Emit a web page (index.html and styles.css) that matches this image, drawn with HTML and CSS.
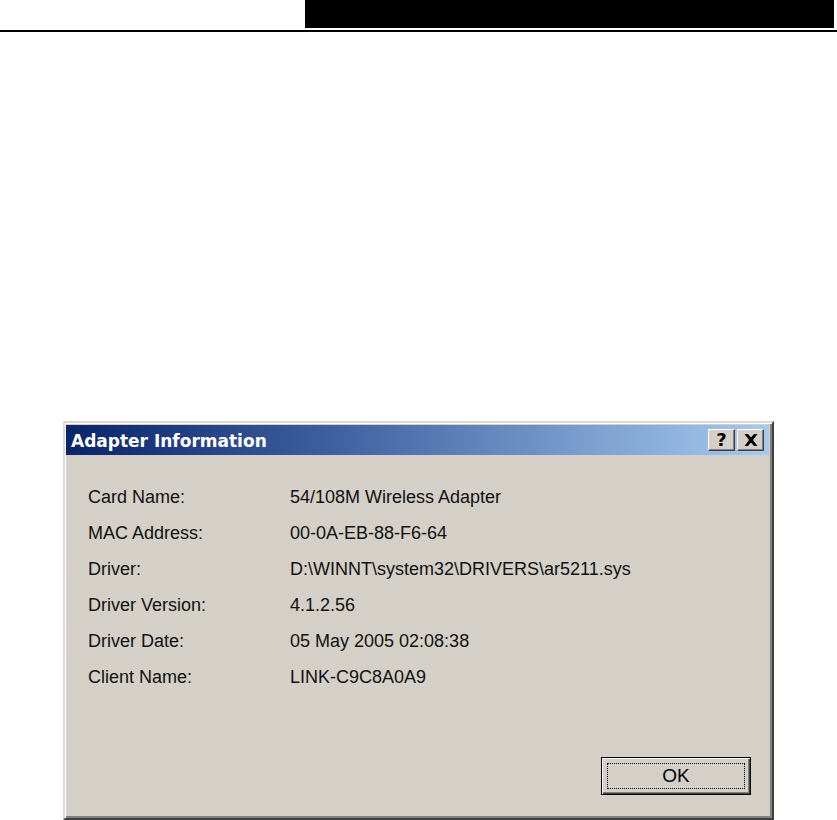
FILE: index.html
```html
<!DOCTYPE html>
<html lang="en">
<head>
<meta charset="utf-8">
<title>Adapter Information</title>
<link rel="stylesheet" href="styles.css">
</head>
<body>
<header class="topbar">
  <div class="blackbox"></div>
</header>
<div class="rule"></div>

<section class="dialog">
  <div class="titlebar">
    <span class="title">Adapter Information</span>
    <div class="tbuttons">
      <button class="tbtn"><span class="qmark">?</span></button>
      <button class="tbtn">
        <svg width="14" height="12" viewBox="0 0 14 12"><path d="M0.5 0h3.5l3 3.6 3-3.6h3.5L9 6l4.5 6H10L7 8.4 4 12H0.5L5 6z" fill="#000"/></svg>
      </button>
    </div>
  </div>

  <div class="info">
    <div class="label">Card Name:</div><div class="value">54/108M Wireless Adapter</div>
    <div class="label">MAC Address:</div><div class="value">00-0A-EB-88-F6-64</div>
    <div class="label">Driver:</div><div class="value">D:\WINNT\system32\DRIVERS\ar5211.sys</div>
    <div class="label">Driver Version:</div><div class="value">4.1.2.56</div>
    <div class="label">Driver Date:</div><div class="value">05 May 2005 02:08:38</div>
    <div class="label">Client Name:</div><div class="value">LINK-C9C8A0A9</div>
  </div>

  <div class="footer">
    <button class="okbtn"><span class="focus">OK</span></button>
  </div>
</section>
</body>
</html>
```

FILE: styles.css
```css
html, body {
  margin: 0;
  padding: 0;
  background: #fff;
}
body {
  width: 837px;
  height: 820px;
  overflow: hidden;
  font-family: "Liberation Sans", Arial, sans-serif;
}
.topbar {
  display: flex;
  height: 28px;
}
.blackbox {
  margin-left: 305px;
  width: 529px;
  background: #000;
}
.rule {
  margin-top: 2px;
  height: 2px;
  background: #000;
}
.dialog {
  box-sizing: border-box;
  margin: 389px 0 0 63px;
  width: 711px;
  height: 399px;
  background: #d4d0c8;
  border: 2px solid;
  border-color: #dcd9d2 #404040 #404040 #dcd9d2;
  box-shadow: inset 1px 1px #fff, inset -2px -2px #808080;
  padding: 2px 3px 2px 1px;
  display: flex;
  flex-direction: column;
}
.titlebar {
  height: 30px;
  display: flex;
  align-items: center;
  justify-content: space-between;
  padding: 0 5px 0 5px;
  background: linear-gradient(to right, #0a246a 0%, #3a5c9c 35%, #a6caf0 100%);
}
.title {
  font-family: "DejaVu Sans", Tahoma, sans-serif;
  font-weight: bold;
  font-size: 17px;
  color: #fff;
  margin-top: 1px;
}
.tbuttons {
  display: flex;
  gap: 2px;
}
.tbtn {
  box-sizing: border-box;
  width: 27px;
  height: 22px;
  padding: 0;
  margin: 0;
  background: #d4d0c8;
  border: 1px solid;
  border-color: #fff #404040 #404040 #fff;
  box-shadow: inset -1px -1px #808080;
  display: flex;
  align-items: center;
  justify-content: center;
}
.qmark {
  font-family: "DejaVu Sans", Tahoma, sans-serif;
  font-weight: bold;
  font-size: 18px;
  line-height: 18px;
  color: #000;
}
.info {
  margin-top: 24px;
  display: grid;
  grid-template-columns: 202px auto;
  padding-left: 22px;
  font-size: 18px;
  line-height: 36px;
  color: #111;
}
.footer {
  margin-top: 62px;
  display: flex;
  justify-content: flex-end;
  padding-right: 18px;
}
.okbtn {
  box-sizing: border-box;
  width: 150px;
  height: 38px;
  margin: 0;
  padding: 5px;
  background: #d4d0c8;
  border: 1px solid #000;
  box-shadow: inset 1px 1px #fff, inset -1px -1px #404040, inset -2px -2px #808080;
  display: flex;
  font-family: "Liberation Sans", Arial, sans-serif;
  font-size: 19px;
  color: #000;
}
.focus {
  flex: 1;
  border: 1px dotted #000;
  display: flex;
  align-items: center;
  justify-content: center;
}
```
